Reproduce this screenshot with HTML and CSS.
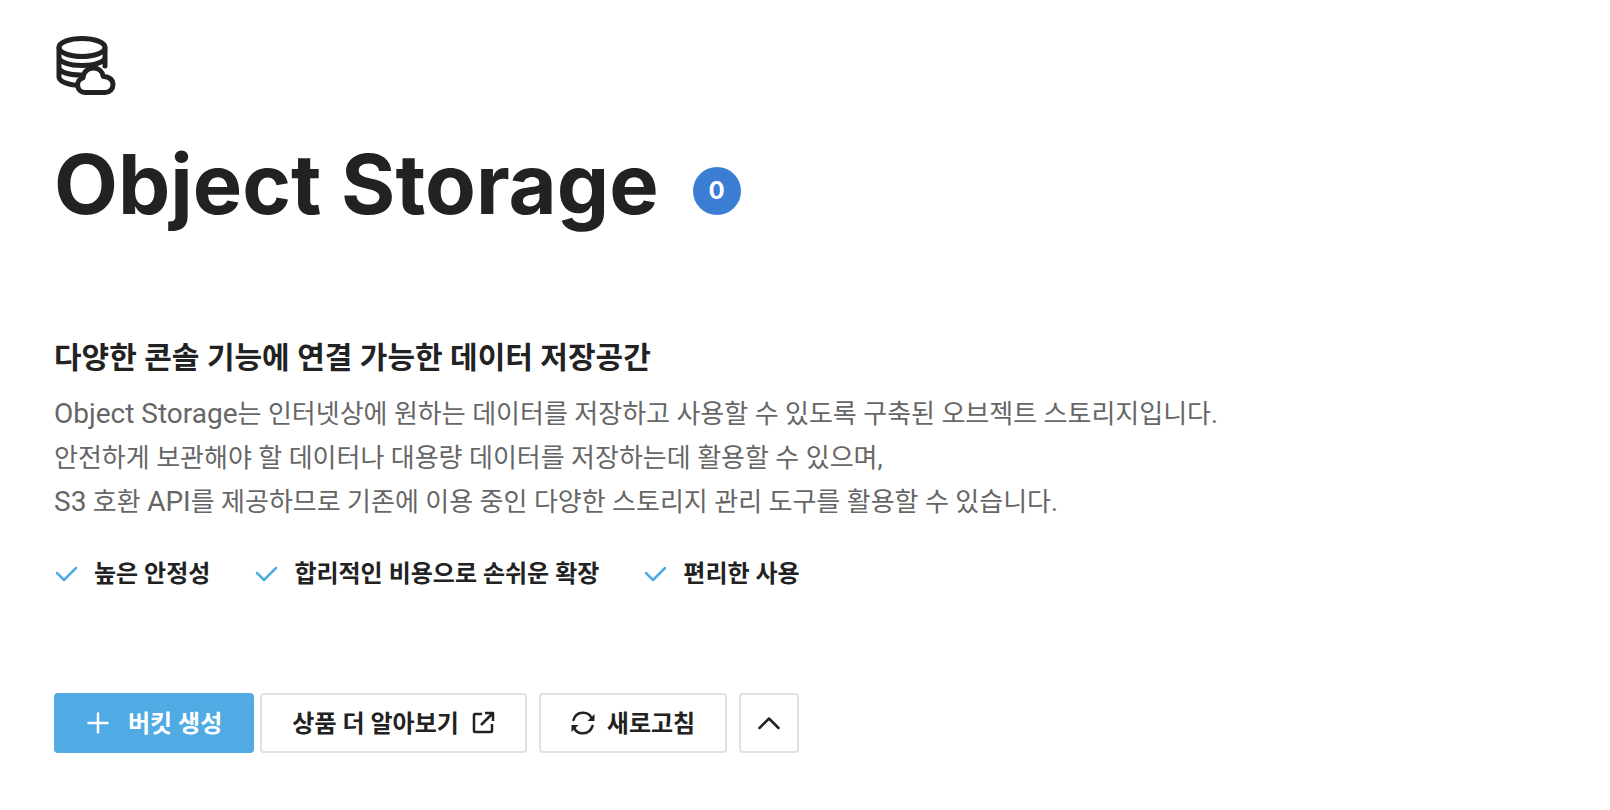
FILE: index.html
```
<!DOCTYPE html>
<html lang="ko">
<head>
    <meta charset="utf-8">
    <meta name="viewport" content="width=device-width, initial-scale=1">
    <title>Object Storage</title>
    <link rel="stylesheet" href="styles.css">
</head>
<body>
    <main class="intro">
        <!-- Title -->
        <header class="header">
            <svg class="service-icon" viewBox="0 0 64 64" aria-hidden="true">
                <path d="M5 12v29c0 4 8 8 20 8.500M51 12v18M5 21c0 5 10 8.500 23 8.500s23-3.500 23-8.500M5 31c0 5 9 8 22 8"/>
                <ellipse cx="28" cy="11.500" rx="23" ry="9"/>
                <path class="cloud" d="M31 56.500a7.500 7.500 0 0 1-2-14.700c.5-6 5-9.800 10.500-9.800 5 0 9 3.500 9.700 8.500 6-.2 9.800 3.500 9.800 8s-3.500 8-8 8z"/>
            </svg>
            <div class="title-row">
                <h1 class="title">Object Storage</h1>
                <span class="badge">0</span>
            </div>
        </header>

        <!-- Description -->
        <section class="description">
            <h2 class="subtitle">다양한 콘솔 기능에 연결 가능한 데이터 저장공간</h2>
            <p class="text">
                <span class="latin">Object Storage</span>는 인터넷상에 원하는 데이터를 저장하고 사용할 수 있도록 구축된 오브젝트 스토리지입니다.<br>
                안전하게 보관해야 할 데이터나 대용량 데이터를 저장하는데 활용할 수 있으며,<br>
                <span class="latin">S3</span> 호환 <span class="latin">API</span>를 제공하므로 기존에 이용 중인 다양한 스토리지 관리 도구를 활용할 수 있습니다.
            </p>
            <ul class="features">
                <li><svg class="icon check" viewBox="0 0 24 24" aria-hidden="true"><path d="M3 11l7 7L22 6"/></svg>높은 안정성</li>
                <li><svg class="icon check" viewBox="0 0 24 24" aria-hidden="true"><path d="M3 11l7 7L22 6"/></svg>합리적인 비용으로 손쉬운 확장</li>
                <li><svg class="icon check" viewBox="0 0 24 24" aria-hidden="true"><path d="M3 11l7 7L22 6"/></svg>편리한 사용</li>
            </ul>
        </section>

        <!-- Actions -->
        <div class="actions">
            <div class="main-actions">
                <button type="button" class="btn btn-primary">
                    <svg class="icon" viewBox="0 0 24 24" aria-hidden="true"><path d="M12 2.500v19M2.500 12h19"/></svg>
                    <span class="label">버킷 생성</span>
                </button>
                <button type="button" class="btn">
                    <span class="label">상품 더 알아보기</span>
                    <svg class="icon square" viewBox="0 0 24 24" aria-hidden="true"><path d="M11 3H4a1 1 0 0 0-1 1v16a1 1 0 0 0 1 1h16a1 1 0 0 0 1-1v-7M10 14L21 3M14 2h8v8"/></svg>
                </button>
            </div>
            <button type="button" class="btn">
                <svg class="icon" viewBox="0 0 24 24" aria-hidden="true">
                    <path d="M2.500 9C5-.5 18-.5 21 8M21.500 15c-3 9.500-15.500 9.500-18.500 1.500"/>
                    <path class="solid" d="M23.500 3v7h-7zM.5 21v-7h7z"/>
                </svg>
                <span class="label">새로고침</span>
            </button>
            <button type="button" class="btn btn-square" aria-label="접기">
                <svg class="icon" viewBox="0 0 24 24" aria-hidden="true"><path d="M2.500 17l9.500-9.500 9.500 9.500"/></svg>
            </button>
        </div>
    </main>
</body>
</html>
```
FILE: styles.css
```
/* General Reset */
* {
    margin: 0;
    padding: 0;
    box-sizing: border-box;
}

body {
    font-family: Roboto, 'Noto Sans CJK KR', sans-serif;
    background: #fff;
    color: #222;
}

.intro {
    padding: 36px 54px;
}

/* Title */
.service-icon {
    display: block;
    width: 64px;
    height: 64px;
    fill: none;
    stroke: #222;
    stroke-width: 5;
    stroke-linecap: round;
    stroke-linejoin: round;
}

.service-icon .cloud {
    fill: #fff;
}

.title-row {
    display: flex;
    align-items: center;
    gap: 34px;
    margin-top: 30px;
}

.title {
    font-family: Inter, sans-serif;
    font-size: 83px;
    font-weight: 700;
    line-height: 108px;
}

.badge {
    width: 48px;
    height: 48px;
    margin-top: 14px;
    border-radius: 50%;
    background: #3b7dd3;
    color: #fff;
    font-family: Inter, sans-serif;
    font-size: 24px;
    font-weight: 700;
    line-height: 48px;
    text-align: center;
}

/* Description */
.description {
    margin-top: 98px;
}

.subtitle {
    font-size: 30px;
    font-weight: 700;
    line-height: 44px;
}

.text {
    margin-top: 12px;
    color: #666;
    font-size: 26px;
    line-height: 44px;
}

.text .latin {
    font-size: 28px;
    line-height: 1;
}

.features {
    display: flex;
    flex-wrap: wrap;
    gap: 44px;
    margin-top: 32px;
    list-style: none;
    font-size: 24px;
    font-weight: 700;
    line-height: 36px;
}

.features li {
    display: flex;
    align-items: center;
    gap: 16px;
}

/* Icons */
.icon {
    width: 24px;
    height: 24px;
    fill: none;
    stroke: currentColor;
    stroke-width: 2.5;
    stroke-linecap: round;
    stroke-linejoin: round;
}

.icon.square {
    stroke-linecap: butt;
}

.icon .solid {
    fill: currentColor;
    stroke: none;
}

.check {
    color: #50aae4;
}

/* Buttons */
.actions {
    display: flex;
    flex-wrap: wrap;
    gap: 12px;
    margin-top: 101px;
}

.main-actions {
    display: flex;
    gap: 6px;
}

.btn {
    display: flex;
    align-items: center;
    gap: 12px;
    height: 60px;
    padding: 0 30px;
    border: 2px solid #e1e1e1;
    border-radius: 4px;
    background: #fff;
    color: #222;
    font-family: inherit;
    font-size: 24px;
    font-weight: 700;
    cursor: pointer;
}

.btn .label {
    padding-bottom: 4px;
}

.btn-primary {
    gap: 18px;
    border-color: #50aae4;
    background: #50aae4;
    color: #fff;
}

.btn-square {
    justify-content: center;
    width: 60px;
    padding: 0;
}
```
